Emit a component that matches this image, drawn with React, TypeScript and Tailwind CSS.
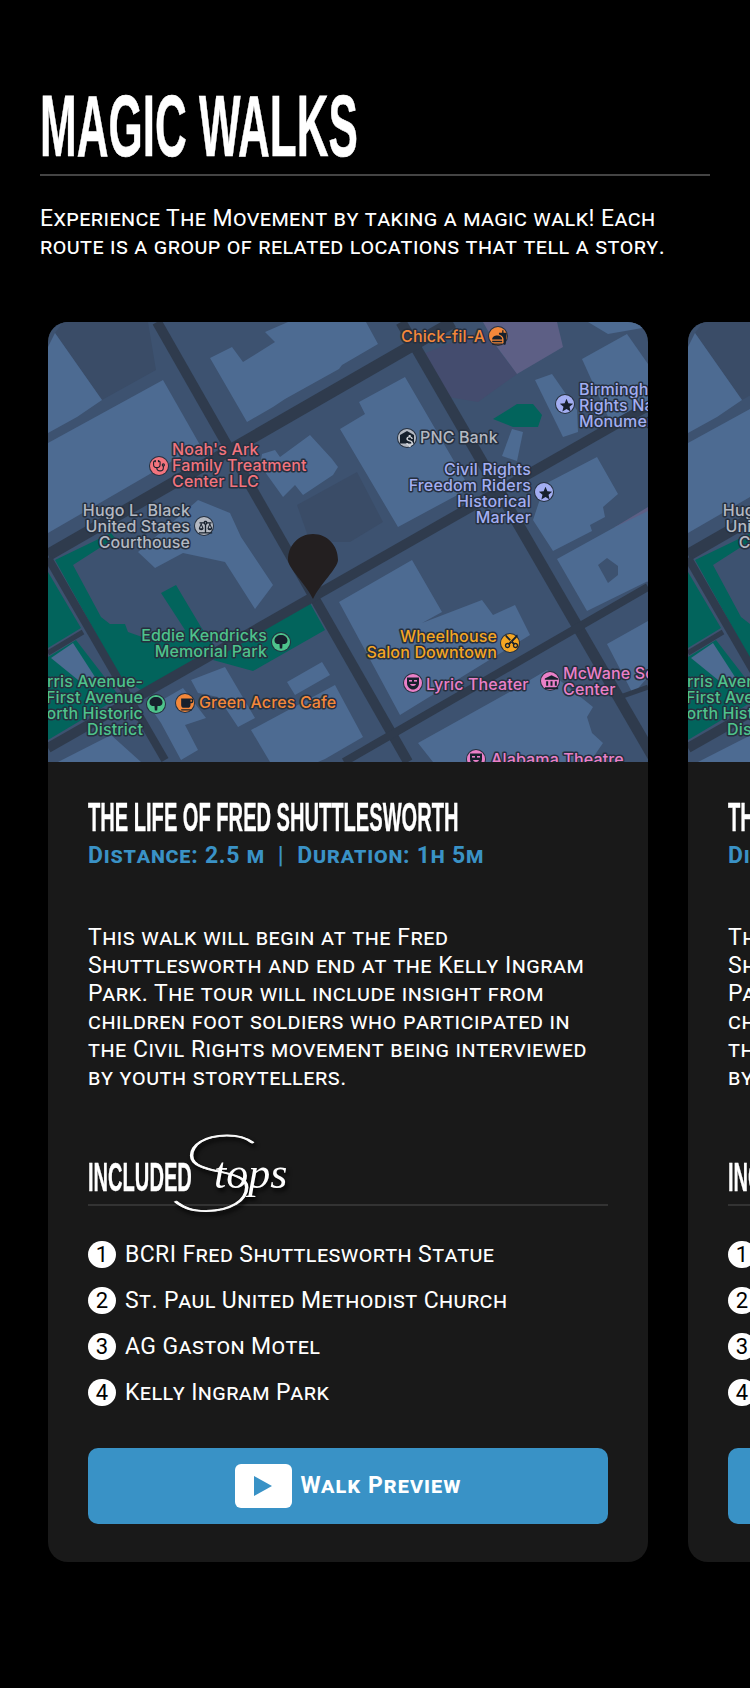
import React from 'react';
import { Stethoscope } from 'lucide-react';
import { MdStar, MdBalance, MdLocalCafe, MdAccountBalance, MdContentCut, MdFastfood, MdAttachMoney } from 'react-icons/md';

const body = 'font-["Roboto",sans-serif] [font-variant:small-caps] text-[23px] leading-7';
const display = 'font-["Liberation_Sans",sans-serif] font-bold origin-left whitespace-nowrap';

const ground = '#3d5270';
const building = '#4d6b92';
const road = '#2f3b4d';
const park = '#02645c';

const buildings = [
  '0,25 7,11 54,78 29,95 0,111',
  '0,121 115,58 152,123 0,211',
  '162,36 184,25 195,40 227,20 217,10 240,0 318,0 330,22 294,43 291,47 237,77 225,85 199,100',
  '311,80 357,55 417,158 415,170 350,205 292,107 317,92',
  '214,132 227,128 232,135 262,113 284,137 290,145 285,153 255,173 247,163 235,175 212,143',
  '90,230 150,178 182,191 193,215 225,263 207,287 177,240 135,231 107,246',
  '487,58 504,52 529,88 530,110 515,115',
  '534,37 579,12 600,42 600,82 562,99',
  '497,162 549,135 570,172 555,185 557,195 542,203 544,209 505,229 485,198',
  '509,237 567,205 600,189 600,259 539,289',
  '559,322 600,299 600,355 585,372',
  '291,280 364,238 394,290 374,301 434,278 445,293 467,283 482,313 352,393',
  '370,421 465,368 499,348 545,385 539,395 544,411 555,421 542,440 385,440',
  '239,360 274,340 282,353 247,373',
  '203,408 287,363 315,415 277,437 270,440 222,440',
  '143,358 177,345 207,396 190,405 170,375 150,371',
  '102,385 135,366 158,396 137,403 150,428 133,438 113,401',
  '3,336 25,321 47,355 35,362',
  '10,440 63,413 93,440',
  '464,107 475,110 469,139 454,134',
  '540,0 600,0 600,5 560,12',
];

const parks = [
  '7,238 63,211 67,216 25,243 53,295 62,302 77,302 80,310 97,316 137,308 113,271 128,263 153,305 173,333 93,368 72,355',
  '165,338 262,281 277,308 205,349',
  '0,250 33,306 0,326',
  '0,335 28,318 72,375 0,418',
  '445,97 469,82 485,82 494,93 490,105 465,105',
];

const roads: [number, number, number, number, number][] = [
  [109, 0, 360, 440, 10],
  [353, 0, 608, 440, 11],
  [0, 233, 405, 0, 12],
  [0, 426, 600, 84, 10],
  [296, 440, 600, 265, 8],
  [0, 236, 117, 438, 8],
  [0, 331, 35, 310, 5],
  [572, 375, 600, 365, 5],
];

const labels = [
  { lines: ['Chick-fil-A'], x: 353, y: 20, color: '#f4883a' },
  { lines: ['Birmingham Civil', 'Rights National', 'Monument'], x: 531, y: 73, color: '#a3aef2' },
  { lines: ['PNC Bank'], x: 372, y: 121, color: '#b4b9c2' },
  { lines: ['Civil Rights', 'Freedom Riders', 'Historical', 'Marker'], x: 483, y: 153, color: '#a3aef2', end: true },
  { lines: ["Noah's Ark", 'Family Treatment', 'Center LLC'], x: 124, y: 133, color: '#f2747e' },
  { lines: ['Hugo L. Black', 'United States', 'Courthouse'], x: 142, y: 194, color: '#b4b9c2', end: true },
  { lines: ['Wheelhouse', 'Salon Downtown'], x: 449, y: 320, color: '#f5a623', end: true },
  { lines: ['Eddie Kendricks', 'Memorial Park'], x: 219, y: 319, color: '#4ec38c', end: true },
  { lines: ['Harris Avenue-', 'First Avenue', 'North Historic', 'District'], x: 95, y: 365, color: '#4ec38c', end: true },
  { lines: ['Green Acres Cafe'], x: 151, y: 386, color: '#f4883a' },
  { lines: ['Lyric Theater'], x: 378, y: 368, color: '#ea80c8' },
  { lines: ['McWane Science', 'Center'], x: 515, y: 357, color: '#ea80c8' },
  { lines: ['Alabama Theatre'], x: 443, y: 443, color: '#ea80c8' },
];

function TreeGlyph({ x, y }: { x: number; y: number }) {
  return (
    <g transform={`translate(${x} ${y})`} fill="#16202c">
      <path d="M-6.5 -1.5 C-6.5 -5 -3.5 -7 0 -7 C3.5 -7 6.5 -5 6.5 -1.5 C6.5 1.5 3.5 2.5 1.5 2 L1.2 6.5 L-1.2 6.5 L-1.5 2 C-3.5 2.5 -6.5 1.5 -6.5 -1.5 Z" />
    </g>
  );
}

function MaskGlyph({ x, y, color }: { x: number; y: number; color: string }) {
  return (
    <g transform={`translate(${x} ${y})`}>
      <path d="M-6 -5.5 L6 -5.5 L6 0 C6 4 3 6.5 0 6.5 C-3 6.5 -6 4 -6 0 Z" fill="#16202c" />
      <rect x="-4" y="-3" width="3" height="1.6" fill={color} />
      <rect x="1" y="-3" width="3" height="1.6" fill={color} />
      <path d="M-3 1 L3 1 C2.5 3.5 -2.5 3.5 -3 1 Z" fill={color} />
    </g>
  );
}

function BankGlyph({ x, y }: { x: number; y: number }) {
  return (
    <g transform={`translate(${x} ${y})`}>
      <path d="M0 -7 L7 -3 L7 5.5 L-7 5.5 L-7 -3 Z" fill="#16202c" />
      <MdAttachMoney x={-5} y={-5} width={10} height={10} color="#d5d8dd" />
    </g>
  );
}

const pois = [
  { x: 450, y: 14, color: '#f4883a', Icon: MdFastfood },
  { x: 517, y: 82, color: '#a3aef2', Icon: MdStar },
  { x: 359, y: 116, color: '#b4b9c2', glyph: 'bank' },
  { x: 496, y: 170, color: '#a3aef2', Icon: MdStar },
  { x: 111, y: 144, color: '#f2747e', Icon: Stethoscope },
  { x: 156, y: 204, color: '#b4b9c2', Icon: MdBalance },
  { x: 462, y: 321, color: '#f5a623', Icon: MdContentCut, spin: true },
  { x: 233, y: 320, color: '#4ec38c', glyph: 'tree' },
  { x: 108, y: 382, color: '#4ec38c', glyph: 'tree' },
  { x: 137, y: 381, color: '#f4883a', Icon: MdLocalCafe },
  { x: 365, y: 361, color: '#ea80c8', glyph: 'mask' },
  { x: 502, y: 359, color: '#ea80c8', Icon: MdAccountBalance },
  { x: 428, y: 437, color: '#ea80c8', glyph: 'mask' },
];

function MapView() {
  return (
    <svg viewBox="0 0 600 440" className="block w-[600px] h-[440px]">
      <rect width="600" height="440" fill={ground} />
      <polygon points="15,0 100,0 108,48 54,78 7,11" fill="#3a4c67" />
      <polygon points="249,183 309,150 335,200 302,220 262,220" fill="#3a4c67" />
      <polygon points="375,32 435,8 469,52 430,80 400,75" fill="#444c6e" />
      <polygon points="435,0 509,0 515,25 469,52 449,25" fill="#5d5f85" />
      <polygon points="567,205 600,185 600,260 580,250" fill="#5d5f85" />
      {parks.map((p) => <polygon key={p} points={p} fill={park} />)}
      {buildings.map((p) => <polygon key={p} points={p} fill={building} />)}
      <polygon points="550,243 559,236 570,244 570,253 560,261" fill={ground} />
      {roads.map(([x1, y1, x2, y2, w]) => (
        <line key={`${x1}-${y1}`} x1={x1} y1={y1} x2={x2} y2={y2} stroke={road} strokeWidth={w} />
      ))}
      <g fontFamily="Inter, sans-serif" fontSize="16" fontWeight="500" letterSpacing="0.15" stroke="#26303f" strokeWidth="3" paintOrder="stroke" strokeLinejoin="round">
        {labels.map((l) => (
          <text key={l.lines[0]} fill={l.color} textAnchor={l.end ? 'end' : 'start'}>
            {l.lines.map((line, i) => (
              <tspan key={line} x={l.x} y={l.y + i * 16}>{line}</tspan>
            ))}
          </text>
        ))}
      </g>
      {pois.map(({ x, y, color, Icon, glyph, spin }) => (
        <g key={`${x}-${y}`}>
          <circle cx={x} cy={y} r="10" fill="#26303f" />
          <circle cx={x} cy={y} r="9" fill={color} />
          {glyph === 'tree' && <TreeGlyph x={x} y={y} />}
          {glyph === 'mask' && <MaskGlyph x={x} y={y} color={color} />}
          {glyph === 'bank' && <BankGlyph x={x} y={y} />}
          {Icon && (
            <g transform={spin ? `rotate(-90 ${x} ${y})` : undefined}>
              <Icon x={x - 6.5} y={y - 6.5} width={13} height={13} color="#16202c" />
            </g>
          )}
        </g>
      ))}
      <path d="M265 277 C258 262 240 246 240 238 C240 223 251 212 265 212 C279 212 290 223 290 238 C290 246 272 262 265 277 Z" fill="#231f20" />
    </svg>
  );
}

const stops = ['BCRI Fred Shuttlesworth Statue', 'St. Paul United Methodist Church', 'AG Gaston Motel', 'Kelly Ingram Park'];

function WalkCard() {
  return (
    <div className="w-[600px] shrink-0 rounded-[20px] overflow-hidden bg-[#191919] text-white">
      <MapView />
      <div className="px-10 pt-[35px] pb-[38px]">
        <h2 className={`${display} text-[41px] leading-[41px] h-[41px] scale-x-[0.49] [-webkit-text-stroke:0.4px_currentColor]`}>THE LIFE OF FRED SHUTTLESWORTH</h2>
        <p className={`${body} mt-[4px] font-bold tracking-[0.77px] text-[#3a92c6] whitespace-pre`}>Distance: 2.5 m  |  Duration: 1h 5m</p>
        <p className={`${body} mt-[54px] tracking-[0.5px]`}>
          This walk will begin at the Fred<br />
          Shuttlesworth and end at the Kelly Ingram<br />
          Park. The tour will include insight from<br />
          children foot soldiers who participated in<br />
          the Civil Rights movement being interviewed<br />
          by youth storytellers.
        </p>
        <div className="mt-[65px] h-[41px] flex">
          <h3 className={`${display} text-[41px] leading-[41px] scale-x-[0.49] w-[84px] [-webkit-text-stroke:0.4px_currentColor]`}>INCLUDED</h3>
          <span className="relative text-white whitespace-nowrap drop-shadow-[2px_3px_2px_#000]">
            <span className='absolute left-[-2px] top-[-40px] font-["Lato",sans-serif] font-thin italic text-[106px] leading-[106px] origin-left scale-x-[1.75] [-webkit-text-stroke:0.8px_white]'>S</span>
            <span className='absolute left-[42px] top-[-5px] font-["Liberation_Serif",serif] italic text-[44px] leading-[44px]'>tops</span>
          </span>
        </div>
        <div className="mt-[6px] h-0.5 bg-[#333333]" />
        <ul className="mt-[35px] flex flex-col gap-[19px]">
          {stops.map((stop, i) => (
            <li key={stop} className="flex items-center h-[27px] gap-[9px]">
              <span className='w-7 h-[27px] rounded-full bg-white text-black flex items-center justify-center text-[22px] font-["Roboto",sans-serif]'>{i + 1}</span>
              <span className={`${body} tracking-[0.4px]`}>{stop}</span>
            </li>
          ))}
        </ul>
        <button className="mt-[42px] w-full h-[76px] rounded-[10px] bg-[#3992c6] flex items-center justify-center gap-[9px]">
          <span className="w-[57px] h-[44px] rounded-md bg-white flex items-center justify-center">
            <svg width="18" height="20" viewBox="0 0 18 20"><path d="M0 0 L18 10 L0 20 Z" fill="#3992c6" /></svg>
          </span>
          <span className={`${body} font-bold tracking-[1.08px] text-white`}>Walk Preview</span>
        </button>
      </div>
    </div>
  );
}

export default function App() {
  return (
    <div className="w-[750px] h-[1688px] overflow-hidden bg-black text-white">
      <div className="pt-[82px] px-10">
        <h1 className={`${display} text-[88px] leading-[88px] h-[88px] scale-x-[0.5] [-webkit-text-stroke:0.6px_currentColor]`}>MAGIC WALKS</h1>
        <div className="mt-1 h-0.5 bg-[#444444]" />
        <p className={`${body} mt-[29px] tracking-[0.4px]`}>
          Experience The Movement by taking a magic walk! Each<br />
          route is a group of related locations that tell a story.
        </p>
      </div>
      <div className="mt-[61px] flex gap-10 pl-12 w-max">
        <WalkCard />
        <WalkCard />
      </div>
    </div>
  );
}
